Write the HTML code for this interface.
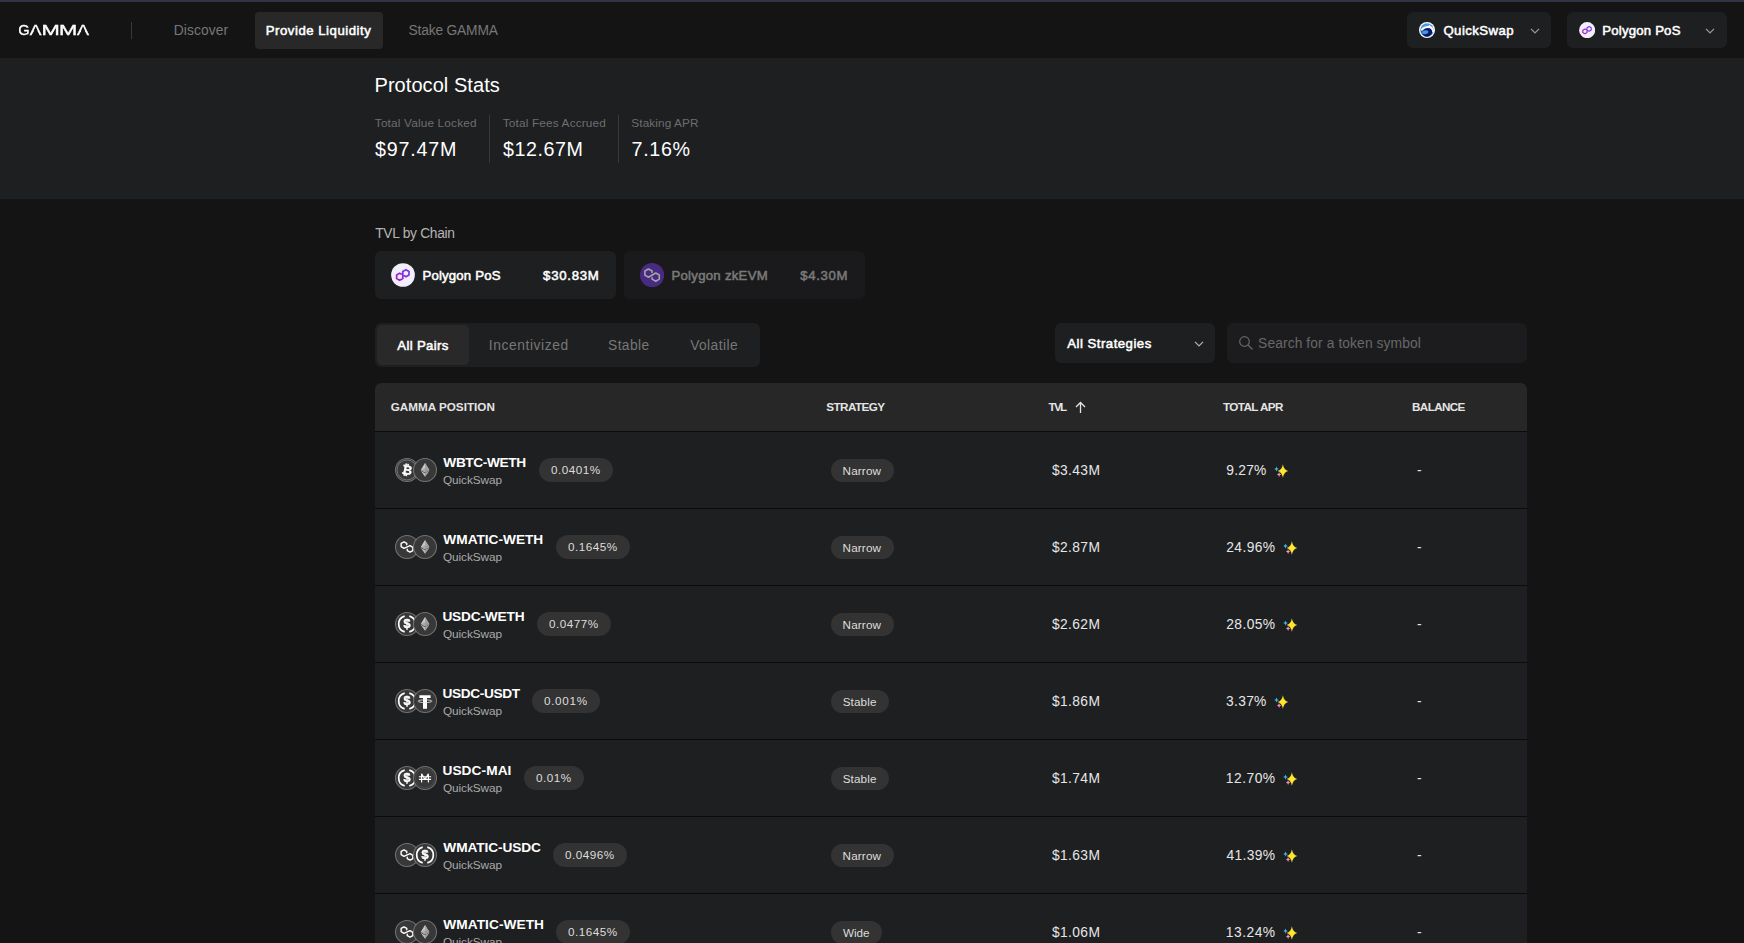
<!DOCTYPE html>
<html lang="en">
<head>
<meta charset="utf-8">
<title>Gamma - Provide Liquidity</title>
<style>
*{box-sizing:border-box;margin:0;padding:0}
html,body{width:1744px;height:943px;overflow:hidden;background:#141414}
body{font-family:"Liberation Sans",sans-serif;color:#fff;position:relative}
span,a,h1,.lbl,.val,.tvlh,.pair,.dex{position:absolute;white-space:nowrap;font-weight:normal}
svg{position:absolute}
.topstrip{position:absolute;left:0;top:0;width:1744px;height:2px;background:#313445}
header{position:absolute;left:0;top:2px;width:1744px;height:56px;background:#141414}
.logo{left:19px;top:19px;width:72px;height:20px;will-change:transform}
.hdiv{position:absolute;left:131px;top:20px;width:1px;height:17px;background:#3a3a3a}
nav a{text-decoration:none}
nav a.active{background:#282828;border-radius:4px}
.hbtn{position:absolute;top:10px;height:36px;background:#1e1f21;border-radius:6px}
.stats{position:absolute;left:0;top:58px;width:1744px;height:141px;background:#1e1f21}
.sdiv{position:absolute;top:57px;width:1px;height:48px;background:#383838}
.chain{position:absolute;top:251px;height:48px;border-radius:6px;background:#1e1f21}
.chain.dim{background:#1a1a1c}
.tabs{position:absolute;left:375px;top:323px;width:385px;height:44px;border-radius:6px;background:#1e1f21}
.tabs .on{left:2px;top:2px;width:92px;height:40px;background:#292929;border-radius:5px}
.sel{position:absolute;left:1055px;top:323px;width:160px;height:40px;border-radius:6px;background:#1e1f21}
.search{position:absolute;left:1227px;top:323px;width:300px;height:40px;border-radius:6px;background:#1c1c1e}
.table{position:absolute;left:375px;top:383px;width:1152px;height:600px;border-radius:6px 6px 0 0;overflow:hidden;background:#0b0b0b}
.thead{position:absolute;left:0;top:0;width:1152px;height:48px;background:#272727}
.row{position:absolute;left:0;width:1152px;height:76px;background:#1e1f21}
.row .icons{left:19px;top:25px;will-change:transform}
.pill{border-radius:12px;background:#333}
</style>
</head>
<body>
<div class="topstrip"></div>
<header>
<svg class="logo" viewBox="0 0 72 20"><text y="14.400" font-family="Liberation Sans, sans-serif" font-size="15.500" fill="#fff" stroke="#fff" stroke-width="0.35"><tspan x="-0.700" textLength="11.400" lengthAdjust="spacingAndGlyphs">G</tspan><tspan x="10.870" textLength="11.670" lengthAdjust="spacingAndGlyphs">A</tspan><tspan x="22.500" textLength="18.310" lengthAdjust="spacingAndGlyphs">M</tspan><tspan x="40" textLength="18.310" lengthAdjust="spacingAndGlyphs">M</tspan><tspan x="58.060" textLength="11.970" lengthAdjust="spacingAndGlyphs">A</tspan></text><path d="M16.700 5.600l3.700 9.200h-7.400zM64.050 5.600l3.800 9.200h-7.600z" fill="#141414"/></svg>
<div class="hdiv"></div><nav>
<a style="left:173.82px;top:20px;font-size:13.8px;line-height:18px;letter-spacing:0.08px;color:#777">Discover</a>
<a class="active" style="left:255px;top:10px;width:128px;height:37px"><span style="left:10.82px;top:10px;font-size:13.2px;line-height:17px;letter-spacing:0.51px;-webkit-text-stroke:0.52px;color:#fff">Provide Liquidity</span></a>
<a style="left:408.5px;top:20px;font-size:13.8px;line-height:18px;letter-spacing:-0.18px;color:#777">Stake GAMMA</a>
</nav>
<div class="hbtn" style="left:1407px;width:144px">
<svg style="left:12px;top:10.4px" width="16" height="16" viewBox="0 0 16 16"><circle cx="8" cy="8" r="8" fill="#fdfdff"/><circle cx="8" cy="8" r="6.800" fill="#4a98dc"/><path d="M2.600 8.200C4.500 5.600 10.500 5 12.800 8.300 14 10.800 12 14 8.500 14.700 4.500 14.900 1.900 11.500 2.600 8.200Z" fill="#0c1466"/><path d="M2.900 7.800C4.500 5.800 7.500 5 9.500 4.800 11.800 4.800 13.600 6.500 14.300 9.500" fill="none" stroke="#fdfdff" stroke-width="1.900" stroke-linecap="round"/><path d="M9.300 4.800L11.200 2.700" stroke="#fdfdff" stroke-width="0.9"/><ellipse cx="6.200" cy="10.200" rx="3.300" ry="1.900" transform="rotate(-12 6.200 10.200)" fill="#3f97e0"/></svg>
<span style="left:36.41px;top:10px;font-size:13.2px;line-height:17px;letter-spacing:0.44px;-webkit-text-stroke:0.52px">QuickSwap</span>
<svg style="left:122.5px;top:15.8px" width="10" height="6" viewBox="0 0 10 6"><path d="M1 0.900l4 4 4-4" fill="none" stroke="#9a9a9a" stroke-width="1.300"/></svg>
</div>
<div class="hbtn" style="left:1567px;width:160px">
<svg style="left:12px;top:10.2px" width="16.3" height="16.3" viewBox="0 0 24 24"><linearGradient id="pg1" x1="0" y1="1" x2="1" y2="0"><stop offset="0.15" stop-color="#a51fc0"/><stop offset="0.85" stop-color="#7638ec"/></linearGradient><circle cx="12" cy="12" r="11.85" fill="#f3eefd"/><path d="M10.15 11.1L8.65 10.25L5.62 12L5.62 15.5L8.65 17.25L11.8 15.5L11.8 8.4L14.95 6.65L17.98 8.4L17.98 11.9L14.95 13.65L13.45 12.8" fill="none" stroke="url(#pg1)" stroke-width="1.75" stroke-linejoin="round" stroke-linecap="round"/></svg>
<span style="left:35.31px;top:10px;font-size:13.2px;line-height:17px;letter-spacing:0.19px;-webkit-text-stroke:0.52px">Polygon PoS</span>
<svg style="left:138.3px;top:15.8px" width="10" height="6" viewBox="0 0 10 6"><path d="M1 0.900l4 4 4-4" fill="none" stroke="#9a9a9a" stroke-width="1.300"/></svg>
</div></header>
<section class="stats">
<h1 style="left:374.5px;top:14px;font-size:20px;line-height:26px;letter-spacing:0.06px">Protocol Stats</h1>
<div class="stat"><span class="lbl" style="left:374.82px;top:58px;font-size:11.8px;line-height:15px;letter-spacing:0.17px;color:#6e6e6e">Total Value Locked</span><span class="val" style="left:375.02px;top:78px;font-size:19.7px;line-height:26px;letter-spacing:0.78px">$97.47M</span></div>
<div class="stat"><span class="lbl" style="left:502.82px;top:58px;font-size:11.8px;line-height:15px;letter-spacing:0.16px;color:#6e6e6e">Total Fees Accrued</span><span class="val" style="left:503.02px;top:78px;font-size:19.7px;line-height:26px;letter-spacing:0.55px">$12.67M</span></div>
<div class="stat"><span class="lbl" style="left:631.34px;top:58px;font-size:11.8px;line-height:15px;letter-spacing:0.1px;color:#6e6e6e">Staking APR</span><span class="val" style="left:631.56px;top:78px;font-size:19.7px;line-height:26px;letter-spacing:0.67px">7.16%</span></div>
<div class="sdiv" style="left:489px"></div><div class="sdiv" style="left:618px"></div>
</section>
<div class="tvlh" style="left:375.24px;top:225px;font-size:13.8px;line-height:18px;letter-spacing:-0.3px;color:#b4b4b4">TVL by Chain</div>
<div class="chain" style="left:375px;width:241px"><svg style="left:16px;top:11.9px" width="24" height="24" viewBox="0 0 24 24"><linearGradient id="pg2" x1="0" y1="1" x2="1" y2="0"><stop offset="0.15" stop-color="#a51fc0"/><stop offset="0.85" stop-color="#7638ec"/></linearGradient><circle cx="12" cy="12" r="11.85" fill="#f3eefd"/><path d="M10.15 11.1L8.65 10.25L5.62 12L5.62 15.5L8.65 17.25L11.8 15.5L11.8 8.4L14.95 6.65L17.98 8.4L17.98 11.9L14.95 13.65L13.45 12.8" fill="none" stroke="url(#pg2)" stroke-width="1.75" stroke-linejoin="round" stroke-linecap="round"/></svg><span style="left:47.46px;top:16px;font-size:13.2px;line-height:17px;letter-spacing:0.18px;-webkit-text-stroke:0.52px">Polygon PoS</span><span style="left:168.12px;top:16px;font-size:13.2px;line-height:17px;letter-spacing:0.72px;-webkit-text-stroke:0.52px">$30.83M</span></div>
<div class="chain dim" style="left:624px;width:241px"><svg style="left:16px;top:12px" width="24.2" height="24.2" viewBox="-12 -12 24 24"><circle cx="0" cy="0" r="12" fill="#482a82"/><path d="M-0.05 -2.65L-0.05 -4.05L-3.6 -6.1L-7.15 -4.05L-7.15 0.05L-3.6 2.1L3.6 -2.1L7.15 -0.05L7.15 4.05L3.6 6.1L0.05 4.05L0.05 2.65" fill="none" stroke="#a4a4a8" stroke-width="1.6" stroke-linejoin="round" stroke-linecap="round"/></svg><span style="left:47.42px;top:16px;font-size:13.2px;line-height:17px;letter-spacing:0.27px;-webkit-text-stroke:0.52px;color:#7a7a7a">Polygon zkEVM</span><span style="left:176.17px;top:16px;font-size:13.2px;line-height:17px;letter-spacing:0.69px;-webkit-text-stroke:0.52px;color:#7a7a7a">$4.30M</span></div>
<div class="tabs"><span class="on"></span>
<span style="left:22.35px;top:14px;font-size:13.2px;line-height:17px;letter-spacing:0.33px;-webkit-text-stroke:0.52px;color:#fff">All Pairs</span>
<span style="left:113.81px;top:14px;font-size:13.8px;line-height:18px;letter-spacing:0.59px;color:#777">Incentivized</span>
<span style="left:233.1px;top:14px;font-size:13.8px;line-height:18px;letter-spacing:0.37px;color:#777">Stable</span>
<span style="left:315.16px;top:14px;font-size:13.8px;line-height:18px;letter-spacing:0.42px;color:#777">Volatile</span>
</div>
<div class="sel"><span style="left:12.32px;top:12px;font-size:13.2px;line-height:17px;letter-spacing:0.48px;-webkit-text-stroke:0.52px">All Strategies</span><svg style="left:138.5px;top:17.8px" width="10" height="6" viewBox="0 0 10 6"><path d="M1 0.900l4 4 4-4" fill="none" stroke="#b0b0b0" stroke-width="1.300"/></svg></div>
<div class="search"><svg style="left:11px;top:12px" width="16" height="16" viewBox="0 0 16 16"><circle cx="6.500" cy="6.500" r="4.800" fill="none" stroke="#666" stroke-width="1.200"/><path d="M10 10l4.500 4.500" stroke="#666" stroke-width="1.200"/></svg><span style="left:31.11px;top:12px;font-size:13.8px;line-height:18px;letter-spacing:0.1px;color:#686868">Search for a token symbol</span></div>
<div class="table"><div class="thead">
<span style="left:15.72px;top:16px;font-size:11.7px;line-height:15px;letter-spacing:0px;font-weight:bold;color:#e4e4e4">GAMMA POSITION</span>
<span style="left:451.3px;top:16px;font-size:11.7px;line-height:15px;letter-spacing:-0.57px;font-weight:bold;color:#e4e4e4">STRATEGY</span>
<span style="left:673.5px;top:16px;font-size:11.7px;line-height:15px;letter-spacing:-1.76px;font-weight:bold;color:#e4e4e4">TVL</span>
<span style="left:848.04px;top:16px;font-size:11.7px;line-height:15px;letter-spacing:-0.6px;font-weight:bold;color:#e4e4e4">TOTAL APR</span>
<span style="left:1037.07px;top:16px;font-size:11.7px;line-height:15px;letter-spacing:-0.63px;font-weight:bold;color:#e4e4e4">BALANCE</span>
<svg style="position:absolute;left:699px;top:17.500px" width="13" height="13" viewBox="0 0 13 13"><path d="M6.500 12V1.500M2 6l4.500-4.500L11 6" fill="none" stroke="#e4e4e4" stroke-width="1.300"/></svg>
</div>
<div class="row" style="top:49px"><svg class="icons" width="44" height="26" viewBox="0 0 44 26"><circle cx="13" cy="13" r="11.5" fill="#383838" stroke="#727272" stroke-width="1.05"/><g transform="translate(13,13)"><circle r="10" fill="none" stroke="#787878" stroke-width="0.9"/><text transform="rotate(10) scale(0.94,1)" x="0.300" y="4.500" text-anchor="middle" font-family="Liberation Sans, sans-serif" font-weight="bold" font-size="13" fill="#fff" stroke="#fff" stroke-width="0.400">₿</text></g><circle cx="31" cy="13" r="11.5" fill="#383838" stroke="#727272" stroke-width="1.05"/><g transform="translate(31,13)"><path d="M0-6.900L4.300 0 0 2.500-4.300 0z" fill="#c8c8c8"/><path d="M0-6.900L4.300 0 0 2.500z" fill="#a6a6a6"/><path d="M0-1.800L4.300 0 0 2.500-4.300 0z" fill="#8e8e8e" opacity="0.500"/><path d="M-4.300 0.700L0 3.200 4.300 0.700 0 6.700z" fill="#bdbdbd"/><path d="M0 3.200L4.300 0.700 0 6.700z" fill="#9c9c9c"/></g></svg><span class="pair" style="left:68.37px;top:22px;font-size:13.7px;line-height:18px;letter-spacing:-0.4px;font-weight:bold">WBTC-WETH</span><span class="dex" style="left:67.92px;top:41px;font-size:11.8px;line-height:15px;letter-spacing:-0.07px;color:#aaa">QuickSwap</span><span class="pill" style="left:164px;top:26px;width:74px;height:24px"></span><span style="left:176.03px;top:30px;font-size:11.7px;line-height:15px;letter-spacing:0.48px;color:#ddd">0.0401%</span><span class="pill" style="left:456px;top:27px;width:63px;height:23px"></span><span style="left:467.52px;top:31px;font-size:11.7px;line-height:15px;letter-spacing:0.17px;color:#ddd">Narrow</span><span style="left:676.91px;top:30px;font-size:13.8px;line-height:18px;letter-spacing:0.4px;color:#e6e6e6">$3.43M</span><span style="left:851.29px;top:30px;font-size:13.8px;line-height:18px;letter-spacing:0.23px;color:#e6e6e6">9.27%</span><svg class="spark" style="left:899.1px;top:31.5px" width="15" height="15" viewBox="0 0 15 15"><path d="M8.9 0.2Q9.8 6.05 14.3 6.95Q9.8 7.85 8.9 13.7Q8 7.85 3.5 6.95Q8 6.05 8.9 0.2Z" fill="#ffe52b"/><path d="M2.5 2.5Q2.85 4.65 4.8 5Q2.85 5.35 2.5 7.5Q2.15 5.35 0.2 5Q2.15 4.65 2.5 2.5Z" fill="#35b9ee"/><path d="M5.1 8.1Q5.45 10.25 7.3 10.6Q5.45 10.95 5.1 13.1Q4.75 10.95 2.9 10.6Q4.75 10.25 5.1 8.1Z" fill="#f48fc4"/></svg><span style="left:1041.88px;top:30px;font-size:13.8px;line-height:18px;letter-spacing:0px;color:#e6e6e6">-</span></div>
<div class="row" style="top:126px"><svg class="icons" width="44" height="26" viewBox="0 0 44 26"><circle cx="13" cy="13" r="11.5" fill="#383838" stroke="#727272" stroke-width="1.05"/><g transform="translate(13,13)"><path d="M-0.24 -2.22L-0.24 -3.52L-3.05 -5.15L-5.86 -3.52L-5.86 -0.27L-3.05 1.35L3.05 -1.35L5.86 0.27L5.86 3.52L3.05 5.15L0.24 3.52L0.24 2.22" fill="none" stroke="#fff" stroke-width="1.4" stroke-linejoin="round" stroke-linecap="round"/></g><circle cx="31" cy="13" r="11.5" fill="#383838" stroke="#727272" stroke-width="1.05"/><g transform="translate(31,13)"><path d="M0-6.900L4.300 0 0 2.500-4.300 0z" fill="#c8c8c8"/><path d="M0-6.900L4.300 0 0 2.500z" fill="#a6a6a6"/><path d="M0-1.800L4.300 0 0 2.500-4.300 0z" fill="#8e8e8e" opacity="0.500"/><path d="M-4.300 0.700L0 3.200 4.300 0.700 0 6.700z" fill="#bdbdbd"/><path d="M0 3.200L4.300 0.700 0 6.700z" fill="#9c9c9c"/></g></svg><span class="pair" style="left:68.37px;top:22px;font-size:13.7px;line-height:18px;letter-spacing:-0.02px;font-weight:bold">WMATIC-WETH</span><span class="dex" style="left:67.92px;top:41px;font-size:11.8px;line-height:15px;letter-spacing:-0.07px;color:#aaa">QuickSwap</span><span class="pill" style="left:181px;top:26px;width:74px;height:24px"></span><span style="left:193.03px;top:30px;font-size:11.7px;line-height:15px;letter-spacing:0.48px;color:#ddd">0.1645%</span><span class="pill" style="left:456px;top:27px;width:63px;height:23px"></span><span style="left:467.52px;top:31px;font-size:11.7px;line-height:15px;letter-spacing:0.17px;color:#ddd">Narrow</span><span style="left:676.91px;top:30px;font-size:13.8px;line-height:18px;letter-spacing:0.4px;color:#e6e6e6">$2.87M</span><span style="left:851.23px;top:30px;font-size:13.8px;line-height:18px;letter-spacing:0.42px;color:#e6e6e6">24.96%</span><svg class="spark" style="left:907.9px;top:31.5px" width="15" height="15" viewBox="0 0 15 15"><path d="M8.9 0.2Q9.8 6.05 14.3 6.95Q9.8 7.85 8.9 13.7Q8 7.85 3.5 6.95Q8 6.05 8.9 0.2Z" fill="#ffe52b"/><path d="M2.5 2.5Q2.85 4.65 4.8 5Q2.85 5.35 2.5 7.5Q2.15 5.35 0.2 5Q2.15 4.65 2.5 2.5Z" fill="#35b9ee"/><path d="M5.1 8.1Q5.45 10.25 7.3 10.6Q5.45 10.95 5.1 13.1Q4.75 10.95 2.9 10.6Q4.75 10.25 5.1 8.1Z" fill="#f48fc4"/></svg><span style="left:1041.88px;top:30px;font-size:13.8px;line-height:18px;letter-spacing:0px;color:#e6e6e6">-</span></div>
<div class="row" style="top:203px"><svg class="icons" width="44" height="26" viewBox="0 0 44 26"><circle cx="13" cy="13" r="11.5" fill="#383838" stroke="#727272" stroke-width="1.05"/><g transform="translate(13,13)"><path d="M-2.3-7.9A8.2 8.2 0 0 0-2.3 7.9M2.3-7.9A8.2 8.2 0 0 1 2.3 7.9" fill="none" stroke="#fff" stroke-width="1.7"/><text x="0" y="4.4" text-anchor="middle" font-family="Liberation Sans, sans-serif" font-weight="bold" font-size="12.500" fill="#fff" stroke="#fff" stroke-width="0.450">$</text></g><circle cx="31" cy="13" r="11.5" fill="#383838" stroke="#727272" stroke-width="1.05"/><g transform="translate(31,13)"><path d="M0-6.900L4.300 0 0 2.500-4.300 0z" fill="#c8c8c8"/><path d="M0-6.900L4.300 0 0 2.500z" fill="#a6a6a6"/><path d="M0-1.800L4.300 0 0 2.500-4.300 0z" fill="#8e8e8e" opacity="0.500"/><path d="M-4.300 0.700L0 3.200 4.300 0.700 0 6.700z" fill="#bdbdbd"/><path d="M0 3.200L4.300 0.700 0 6.700z" fill="#9c9c9c"/></g></svg><span class="pair" style="left:67.43px;top:22px;font-size:13.7px;line-height:18px;letter-spacing:-0.19px;font-weight:bold">USDC-WETH</span><span class="dex" style="left:67.92px;top:41px;font-size:11.8px;line-height:15px;letter-spacing:-0.07px;color:#aaa">QuickSwap</span><span class="pill" style="left:162px;top:26px;width:74px;height:24px"></span><span style="left:174.03px;top:30px;font-size:11.7px;line-height:15px;letter-spacing:0.48px;color:#ddd">0.0477%</span><span class="pill" style="left:456px;top:27px;width:63px;height:23px"></span><span style="left:467.52px;top:31px;font-size:11.7px;line-height:15px;letter-spacing:0.17px;color:#ddd">Narrow</span><span style="left:676.91px;top:30px;font-size:13.8px;line-height:18px;letter-spacing:0.4px;color:#e6e6e6">$2.62M</span><span style="left:851.23px;top:30px;font-size:13.8px;line-height:18px;letter-spacing:0.42px;color:#e6e6e6">28.05%</span><svg class="spark" style="left:907.9px;top:31.5px" width="15" height="15" viewBox="0 0 15 15"><path d="M8.9 0.2Q9.8 6.05 14.3 6.95Q9.8 7.85 8.9 13.7Q8 7.85 3.5 6.95Q8 6.05 8.9 0.2Z" fill="#ffe52b"/><path d="M2.5 2.5Q2.85 4.65 4.8 5Q2.85 5.35 2.5 7.5Q2.15 5.35 0.2 5Q2.15 4.65 2.5 2.5Z" fill="#35b9ee"/><path d="M5.1 8.1Q5.45 10.25 7.3 10.6Q5.45 10.95 5.1 13.1Q4.75 10.95 2.9 10.6Q4.75 10.25 5.1 8.1Z" fill="#f48fc4"/></svg><span style="left:1041.88px;top:30px;font-size:13.8px;line-height:18px;letter-spacing:0px;color:#e6e6e6">-</span></div>
<div class="row" style="top:280px"><svg class="icons" width="44" height="26" viewBox="0 0 44 26"><circle cx="13" cy="13" r="11.5" fill="#383838" stroke="#727272" stroke-width="1.05"/><g transform="translate(13,13)"><path d="M-2.3-7.9A8.2 8.2 0 0 0-2.3 7.9M2.3-7.9A8.2 8.2 0 0 1 2.3 7.9" fill="none" stroke="#fff" stroke-width="1.7"/><text x="0" y="4.4" text-anchor="middle" font-family="Liberation Sans, sans-serif" font-weight="bold" font-size="12.500" fill="#fff" stroke="#fff" stroke-width="0.450">$</text></g><circle cx="31" cy="13" r="11.5" fill="#383838" stroke="#727272" stroke-width="1.05"/><g transform="translate(31,13)"><path d="M-5.600-5.800h11.200v2.800h-3.600v10.800h-4v-10.800h-3.600z" fill="#fff"/><ellipse cx="0" cy="0.200" rx="6.900" ry="1.400" fill="none" stroke="#ededed" stroke-width="0.8"/></g></svg><span class="pair" style="left:67.43px;top:22px;font-size:13.7px;line-height:18px;letter-spacing:-0.37px;font-weight:bold">USDC-USDT</span><span class="dex" style="left:67.92px;top:41px;font-size:11.8px;line-height:15px;letter-spacing:-0.07px;color:#aaa">QuickSwap</span><span class="pill" style="left:157px;top:26px;width:68px;height:24px"></span><span style="left:169.03px;top:30px;font-size:11.7px;line-height:15px;letter-spacing:0.68px;color:#ddd">0.001%</span><span class="pill" style="left:456px;top:27px;width:58px;height:23px"></span><span style="left:467.73px;top:31px;font-size:11.7px;line-height:15px;letter-spacing:0.11px;color:#ddd">Stable</span><span style="left:676.91px;top:30px;font-size:13.8px;line-height:18px;letter-spacing:0.4px;color:#e6e6e6">$1.86M</span><span style="left:851.11px;top:30px;font-size:13.8px;line-height:18px;letter-spacing:0.28px;color:#e6e6e6">3.37%</span><svg class="spark" style="left:899.1px;top:31.5px" width="15" height="15" viewBox="0 0 15 15"><path d="M8.9 0.2Q9.8 6.05 14.3 6.95Q9.8 7.85 8.9 13.7Q8 7.85 3.5 6.95Q8 6.05 8.9 0.2Z" fill="#ffe52b"/><path d="M2.5 2.5Q2.85 4.65 4.8 5Q2.85 5.35 2.5 7.5Q2.15 5.35 0.2 5Q2.15 4.65 2.5 2.5Z" fill="#35b9ee"/><path d="M5.1 8.1Q5.45 10.25 7.3 10.6Q5.45 10.95 5.1 13.1Q4.75 10.95 2.9 10.6Q4.75 10.25 5.1 8.1Z" fill="#f48fc4"/></svg><span style="left:1041.88px;top:30px;font-size:13.8px;line-height:18px;letter-spacing:0px;color:#e6e6e6">-</span></div>
<div class="row" style="top:357px"><svg class="icons" width="44" height="26" viewBox="0 0 44 26"><circle cx="13" cy="13" r="11.5" fill="#383838" stroke="#727272" stroke-width="1.05"/><g transform="translate(13,13)"><path d="M-2.3-7.9A8.2 8.2 0 0 0-2.3 7.9M2.3-7.9A8.2 8.2 0 0 1 2.3 7.9" fill="none" stroke="#fff" stroke-width="1.7"/><text x="0" y="4.4" text-anchor="middle" font-family="Liberation Sans, sans-serif" font-weight="bold" font-size="12.500" fill="#fff" stroke="#fff" stroke-width="0.450">$</text></g><circle cx="31" cy="13" r="11.5" fill="#383838" stroke="#727272" stroke-width="1.05"/><g transform="translate(31,13)"><circle r="9.700" fill="none" stroke="#484848" stroke-width="1"/><path d="M-3.400 4.400v-8.600l3.400 5.600 3.400-5.600v8.600M-6.100-1.300h12.200M-6.100 1.400h12.200" fill="none" stroke="#fff" stroke-width="1.150" stroke-linejoin="bevel"/></g></svg><span class="pair" style="left:67.43px;top:22px;font-size:13.7px;line-height:18px;letter-spacing:0.08px;font-weight:bold">USDC-MAI</span><span class="dex" style="left:67.92px;top:41px;font-size:11.8px;line-height:15px;letter-spacing:-0.07px;color:#aaa">QuickSwap</span><span class="pill" style="left:149px;top:26px;width:60px;height:24px"></span><span style="left:161.03px;top:30px;font-size:11.7px;line-height:15px;letter-spacing:0.48px;color:#ddd">0.01%</span><span class="pill" style="left:456px;top:27px;width:58px;height:23px"></span><span style="left:467.73px;top:31px;font-size:11.7px;line-height:15px;letter-spacing:0.11px;color:#ddd">Stable</span><span style="left:676.91px;top:30px;font-size:13.8px;line-height:18px;letter-spacing:0.4px;color:#e6e6e6">$1.74M</span><span style="left:850.79px;top:30px;font-size:13.8px;line-height:18px;letter-spacing:0.51px;color:#e6e6e6">12.70%</span><svg class="spark" style="left:907.9px;top:31.5px" width="15" height="15" viewBox="0 0 15 15"><path d="M8.9 0.2Q9.8 6.05 14.3 6.95Q9.8 7.85 8.9 13.7Q8 7.85 3.5 6.95Q8 6.05 8.9 0.2Z" fill="#ffe52b"/><path d="M2.5 2.5Q2.85 4.65 4.8 5Q2.85 5.35 2.5 7.5Q2.15 5.35 0.2 5Q2.15 4.65 2.5 2.5Z" fill="#35b9ee"/><path d="M5.1 8.1Q5.45 10.25 7.3 10.6Q5.45 10.95 5.1 13.1Q4.75 10.95 2.9 10.6Q4.75 10.25 5.1 8.1Z" fill="#f48fc4"/></svg><span style="left:1041.88px;top:30px;font-size:13.8px;line-height:18px;letter-spacing:0px;color:#e6e6e6">-</span></div>
<div class="row" style="top:434px"><svg class="icons" width="44" height="26" viewBox="0 0 44 26"><circle cx="13" cy="13" r="11.5" fill="#383838" stroke="#727272" stroke-width="1.05"/><g transform="translate(13,13)"><path d="M-0.24 -2.22L-0.24 -3.52L-3.05 -5.15L-5.86 -3.52L-5.86 -0.27L-3.05 1.35L3.05 -1.35L5.86 0.27L5.86 3.52L3.05 5.15L0.24 3.52L0.24 2.22" fill="none" stroke="#fff" stroke-width="1.4" stroke-linejoin="round" stroke-linecap="round"/></g><circle cx="31" cy="13" r="11.5" fill="#383838" stroke="#727272" stroke-width="1.05"/><g transform="translate(31,13)"><path d="M-2.3-7.9A8.2 8.2 0 0 0-2.3 7.9M2.3-7.9A8.2 8.2 0 0 1 2.3 7.9" fill="none" stroke="#fff" stroke-width="1.7"/><text x="0" y="4.4" text-anchor="middle" font-family="Liberation Sans, sans-serif" font-weight="bold" font-size="12.500" fill="#fff" stroke="#fff" stroke-width="0.450">$</text></g></svg><span class="pair" style="left:68.37px;top:22px;font-size:13.7px;line-height:18px;letter-spacing:-0.11px;font-weight:bold">WMATIC-USDC</span><span class="dex" style="left:67.92px;top:41px;font-size:11.8px;line-height:15px;letter-spacing:-0.07px;color:#aaa">QuickSwap</span><span class="pill" style="left:178px;top:26px;width:74px;height:24px"></span><span style="left:190.03px;top:30px;font-size:11.7px;line-height:15px;letter-spacing:0.48px;color:#ddd">0.0496%</span><span class="pill" style="left:456px;top:27px;width:63px;height:23px"></span><span style="left:467.52px;top:31px;font-size:11.7px;line-height:15px;letter-spacing:0.17px;color:#ddd">Narrow</span><span style="left:676.91px;top:30px;font-size:13.8px;line-height:18px;letter-spacing:0.4px;color:#e6e6e6">$1.63M</span><span style="left:851.53px;top:30px;font-size:13.8px;line-height:18px;letter-spacing:0.36px;color:#e6e6e6">41.39%</span><svg class="spark" style="left:907.9px;top:31.5px" width="15" height="15" viewBox="0 0 15 15"><path d="M8.9 0.2Q9.8 6.05 14.3 6.95Q9.8 7.85 8.9 13.7Q8 7.85 3.5 6.95Q8 6.05 8.9 0.2Z" fill="#ffe52b"/><path d="M2.5 2.5Q2.85 4.65 4.8 5Q2.85 5.35 2.5 7.5Q2.15 5.35 0.2 5Q2.15 4.65 2.5 2.5Z" fill="#35b9ee"/><path d="M5.1 8.1Q5.45 10.25 7.3 10.6Q5.45 10.95 5.1 13.1Q4.75 10.95 2.9 10.6Q4.75 10.25 5.1 8.1Z" fill="#f48fc4"/></svg><span style="left:1041.88px;top:30px;font-size:13.8px;line-height:18px;letter-spacing:0px;color:#e6e6e6">-</span></div>
<div class="row" style="top:511px"><svg class="icons" width="44" height="26" viewBox="0 0 44 26"><circle cx="13" cy="13" r="11.5" fill="#383838" stroke="#727272" stroke-width="1.05"/><g transform="translate(13,13)"><path d="M-0.24 -2.22L-0.24 -3.52L-3.05 -5.15L-5.86 -3.52L-5.86 -0.27L-3.05 1.35L3.05 -1.35L5.86 0.27L5.86 3.52L3.05 5.15L0.24 3.52L0.24 2.22" fill="none" stroke="#fff" stroke-width="1.4" stroke-linejoin="round" stroke-linecap="round"/></g><circle cx="31" cy="13" r="11.5" fill="#383838" stroke="#727272" stroke-width="1.05"/><g transform="translate(31,13)"><path d="M0-6.900L4.300 0 0 2.500-4.300 0z" fill="#c8c8c8"/><path d="M0-6.900L4.300 0 0 2.500z" fill="#a6a6a6"/><path d="M0-1.800L4.300 0 0 2.500-4.300 0z" fill="#8e8e8e" opacity="0.500"/><path d="M-4.300 0.700L0 3.200 4.300 0.700 0 6.700z" fill="#bdbdbd"/><path d="M0 3.200L4.300 0.700 0 6.700z" fill="#9c9c9c"/></g></svg><span class="pair" style="left:68.37px;top:22px;font-size:13.7px;line-height:18px;letter-spacing:0.05px;font-weight:bold">WMATIC-WETH</span><span class="dex" style="left:67.92px;top:41px;font-size:11.8px;line-height:15px;letter-spacing:-0.07px;color:#aaa">QuickSwap</span><span class="pill" style="left:181px;top:26px;width:74px;height:24px"></span><span style="left:193.03px;top:30px;font-size:11.7px;line-height:15px;letter-spacing:0.48px;color:#ddd">0.1645%</span><span class="pill" style="left:456px;top:27px;width:51px;height:23px"></span><span style="left:468.08px;top:31px;font-size:11.7px;line-height:15px;letter-spacing:-0.1px;color:#ddd">Wide</span><span style="left:676.91px;top:30px;font-size:13.8px;line-height:18px;letter-spacing:0.4px;color:#e6e6e6">$1.06M</span><span style="left:850.79px;top:30px;font-size:13.8px;line-height:18px;letter-spacing:0.51px;color:#e6e6e6">13.24%</span><svg class="spark" style="left:907.9px;top:31.5px" width="15" height="15" viewBox="0 0 15 15"><path d="M8.9 0.2Q9.8 6.05 14.3 6.95Q9.8 7.85 8.9 13.7Q8 7.85 3.5 6.95Q8 6.05 8.9 0.2Z" fill="#ffe52b"/><path d="M2.5 2.5Q2.85 4.65 4.8 5Q2.85 5.35 2.5 7.5Q2.15 5.35 0.2 5Q2.15 4.65 2.5 2.5Z" fill="#35b9ee"/><path d="M5.1 8.1Q5.45 10.25 7.3 10.6Q5.45 10.95 5.1 13.1Q4.75 10.95 2.9 10.6Q4.75 10.25 5.1 8.1Z" fill="#f48fc4"/></svg><span style="left:1041.88px;top:30px;font-size:13.8px;line-height:18px;letter-spacing:0px;color:#e6e6e6">-</span></div>
</div>
</body>
</html>
